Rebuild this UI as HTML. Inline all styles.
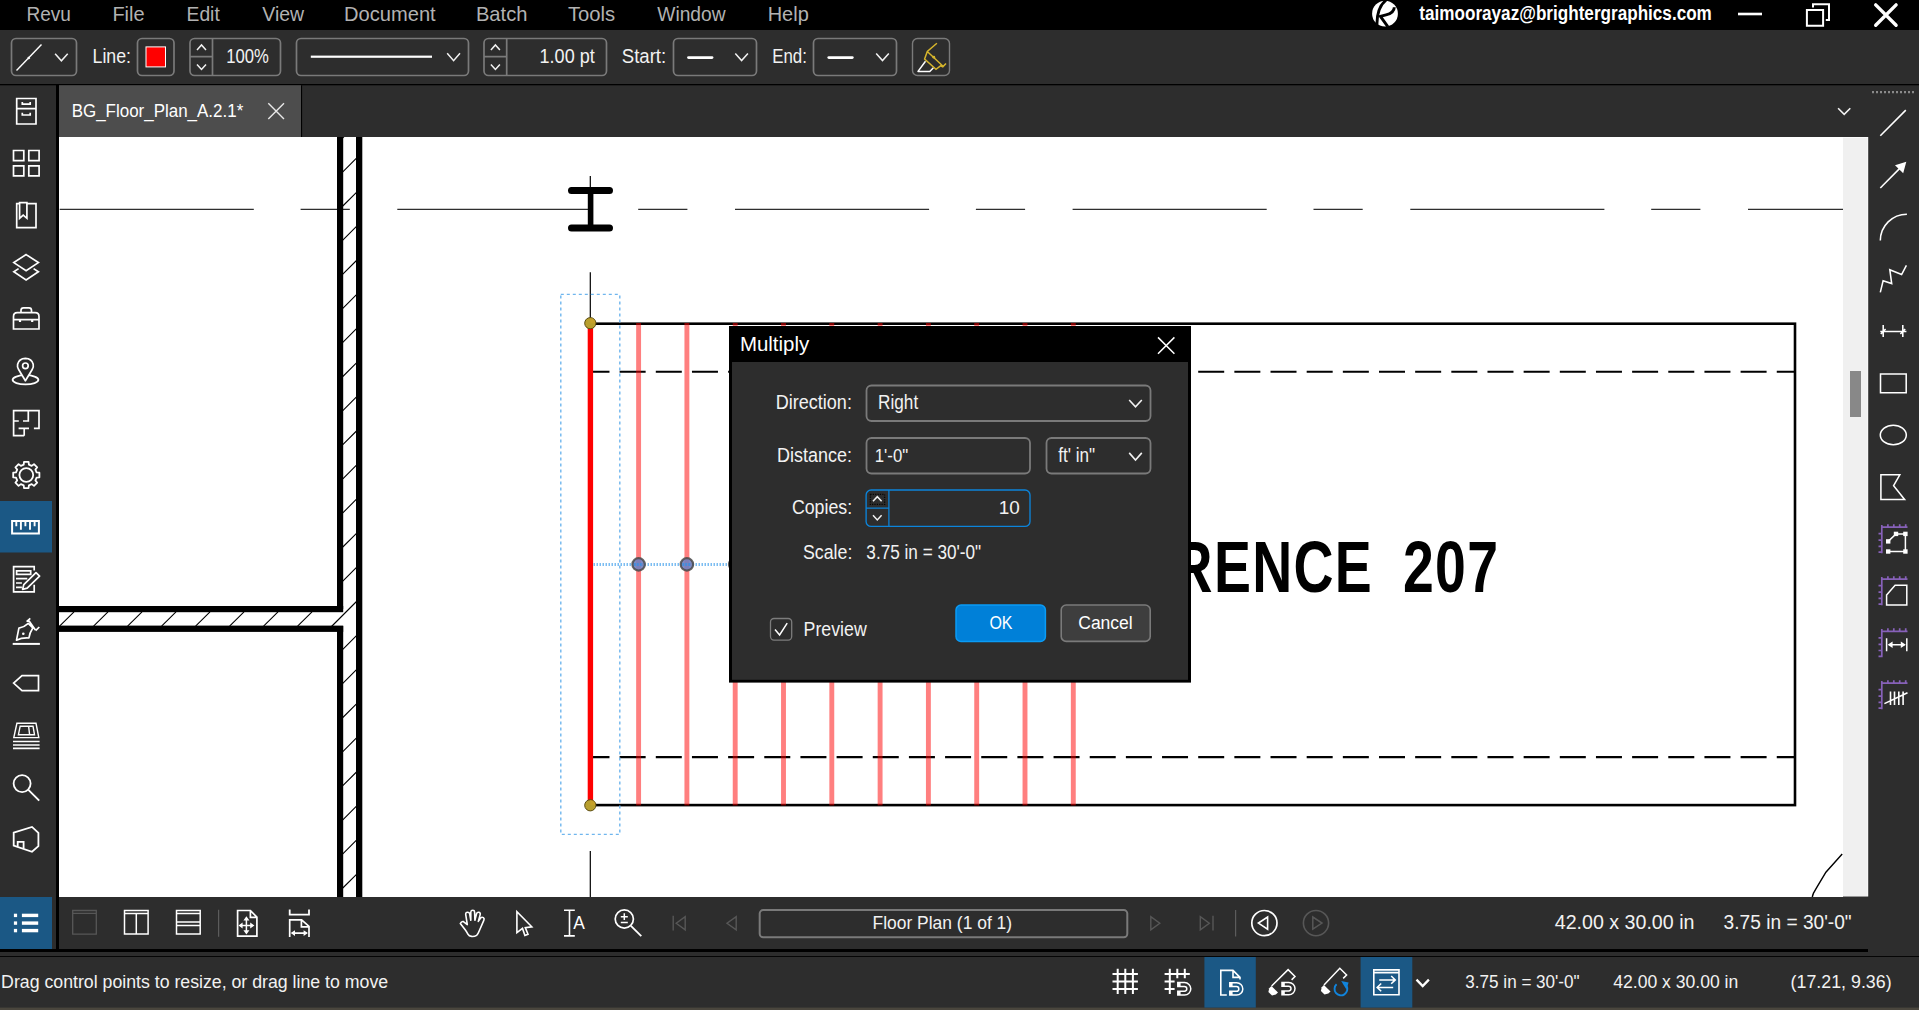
<!DOCTYPE html>
<html lang="en"><head><meta charset="utf-8"><title>Revu - BG_Floor_Plan_A.2.1</title>
<style>
html,body{margin:0;padding:0;background:#2d2d2d;overflow:hidden}
body{width:1919px;height:1010px}
svg{display:block;position:absolute;left:0;top:0}
svg text{font-family:"Liberation Sans",sans-serif;white-space:pre}
</style></head><body>
<svg width="1919" height="1010" viewBox="0 0 1919 1010">
<rect x="0" y="0" width="1919" height="1010" fill="#2d2d2d"/>
<rect x="0" y="0" width="1919" height="30" fill="#000"/>
<rect x="0" y="84" width="1919" height="1.3" fill="#000"/>
<rect x="59" y="85.3" width="242" height="52" fill="#4d4d4d"/>
<rect x="301" y="85.3" width="1.1" height="52" fill="#000"/>
<rect x="56" y="85" width="3" height="867" fill="#000"/>
<rect x="59" y="137" width="1784" height="760" fill="#fff"/>
<rect x="1843" y="137" width="25.2" height="759.5" fill="#fff"/><rect x="1843" y="137.6" width="24.6" height="758.4" fill="#f0f0f0"/>
<rect x="1850" y="371" width="11" height="46" fill="#888"/>
<rect x="0" y="949" width="1868" height="3" fill="#000"/>
<rect x="0" y="956" width="1919" height="1" fill="#050505"/>
<rect x="0" y="1007.6" width="1919" height="3" fill="#4a463d"/>
<rect x="0" y="501" width="52" height="51.5" fill="#1b5885"/>
<rect x="0" y="897" width="52" height="52" fill="#1b5885"/>
<rect x="1204.4" y="957" width="51.4" height="50.6" fill="#1b5885"/>
<rect x="1360.6" y="957" width="51.7" height="50.6" fill="#1b5885"/>
<text x="26.43" y="20.7" font-size="20.2" fill="#b2b2b2" textLength="44.44" lengthAdjust="spacingAndGlyphs" >Revu</text>
<text x="112.38" y="20.7" font-size="20.2" fill="#b2b2b2" textLength="32.20" lengthAdjust="spacingAndGlyphs" >File</text>
<text x="186.54" y="20.7" font-size="20.2" fill="#b2b2b2" textLength="33.21" lengthAdjust="spacingAndGlyphs" >Edit</text>
<text x="262.28" y="20.7" font-size="20.2" fill="#b2b2b2" textLength="41.87" lengthAdjust="spacingAndGlyphs" >View</text>
<text x="344.06" y="20.7" font-size="20.2" fill="#b2b2b2" textLength="91.66" lengthAdjust="spacingAndGlyphs" >Document</text>
<text x="475.94" y="20.7" font-size="20.2" fill="#b2b2b2" textLength="51.48" lengthAdjust="spacingAndGlyphs" >Batch</text>
<text x="567.94" y="20.7" font-size="20.2" fill="#b2b2b2" textLength="47.26" lengthAdjust="spacingAndGlyphs" >Tools</text>
<text x="657.28" y="20.7" font-size="20.2" fill="#b2b2b2" textLength="68.31" lengthAdjust="spacingAndGlyphs" >Window</text>
<text x="767.69" y="20.7" font-size="20.2" fill="#b2b2b2" textLength="41.07" lengthAdjust="spacingAndGlyphs" >Help</text>
<text x="1419.32" y="20.0" font-size="19.6" font-weight="bold" fill="#ffffff" textLength="292.52" lengthAdjust="spacingAndGlyphs" >taimoorayaz@brightergraphics.com</text>
<g transform="translate(1360,0)"><circle cx="25" cy="13.7" r="12.9" fill="#fff"/><path d="M26.6 -0.5C20.5 4.5 16.6 12 17 25" fill="none" stroke="#000" stroke-width="2.9"/><path d="M34.3 7.2C34.2 12.2 30.5 13.8 26 14.9L20.4 16.4L27.8 26.6" fill="none" stroke="#000" stroke-width="2.9" stroke-linejoin="miter"/></g>
<rect x="1738" y="12.7" width="24" height="2.6" fill="#fff"/>
<path d="M1806.9 9.9H1823.1V25.8H1806.9ZM1813 7.4V4.2H1829V19.9H1825.8" fill="none" stroke="#fff" stroke-width="2"/>
<path d="M1875.7 4.9L1896.1 25.2M1896.1 4.9L1875.7 25.2" fill="none" stroke="#fff" stroke-width="3.4" stroke-linecap="round"/>
<rect x="11.5" y="38.5" width="65.0" height="37.0" rx="4.5" fill="none" stroke="#7a7a7a" stroke-width="1.7"/>
<path d="M16.5 70.5L41.5 44.5" stroke="#fff" stroke-width="1.4" fill="none"/><path d="M28 58.5l1.6-1.2" stroke="#fff" stroke-width="2.2"/>
<path d="M55.1 53.8L61.4 60.8L67.7 53.8" fill="none" stroke="#f2f2f2" stroke-width="1.5"/>
<text x="92.50" y="63.0" font-size="19.7" fill="#f2f2f2" textLength="38.56" lengthAdjust="spacingAndGlyphs" >Line:</text>
<rect x="137.5" y="38.5" width="36.5" height="37.0" rx="4.5" fill="none" stroke="#7a7a7a" stroke-width="1.7"/>
<rect x="146" y="46.9" width="19.5" height="20" fill="#ff0000" stroke="#fff" stroke-width="1"/>
<rect x="190.0" y="38.5" width="90.5" height="37.0" rx="4.5" fill="none" stroke="#7a7a7a" stroke-width="1.7"/>
<path d="M212.5 38.5V75.5M190 56.7H212.5" stroke="#7a7a7a" stroke-width="1.7" fill="none"/>
<path d="M197.0 49.9L201.5 44.9L206.0 49.9" fill="none" stroke="#f2f2f2" stroke-width="1.5"/>
<path d="M197.0 64.5L201.5 69.5L206.0 64.5" fill="none" stroke="#f2f2f2" stroke-width="1.5"/>
<text x="226.23" y="63.0" font-size="19.7" fill="#f2f2f2" textLength="42.65" lengthAdjust="spacingAndGlyphs" >100%</text>
<rect x="296.5" y="38.5" width="172.0" height="37.0" rx="4.5" fill="none" stroke="#7a7a7a" stroke-width="1.7"/>
<rect x="310.8" y="55.6" width="121.2" height="2.2" fill="#fff"/>
<path d="M447.2 53.3L453.6 60.7L460.0 53.3" fill="none" stroke="#f2f2f2" stroke-width="1.5"/>
<rect x="484.0" y="38.5" width="122.5" height="37.0" rx="4.5" fill="none" stroke="#7a7a7a" stroke-width="1.7"/>
<path d="M506.7 38.5V75.5M484 56.7H506.7" stroke="#7a7a7a" stroke-width="1.7" fill="none"/>
<path d="M490.9 49.9L495.4 44.9L499.9 49.9" fill="none" stroke="#f2f2f2" stroke-width="1.5"/>
<path d="M490.9 64.5L495.4 69.5L499.9 64.5" fill="none" stroke="#f2f2f2" stroke-width="1.5"/>
<text x="539.60" y="63.0" font-size="19.7" fill="#f2f2f2" textLength="55.12" lengthAdjust="spacingAndGlyphs" >1.00 pt</text>
<text x="621.73" y="63.0" font-size="19.7" fill="#f2f2f2" textLength="44.46" lengthAdjust="spacingAndGlyphs" >Start:</text>
<rect x="673.5" y="38.5" width="83.0" height="37.0" rx="4.5" fill="none" stroke="#7a7a7a" stroke-width="1.7"/>
<path d="M688.5 57.6H712" stroke="#fff" stroke-width="2.8" stroke-linecap="round"/>
<path d="M735.3 53.4L741.6 60.6L747.9 53.4" fill="none" stroke="#f2f2f2" stroke-width="1.5"/>
<text x="772.24" y="63.0" font-size="19.7" fill="#f2f2f2" textLength="34.68" lengthAdjust="spacingAndGlyphs" >End:</text>
<rect x="813.5" y="38.5" width="83.0" height="37.0" rx="4.5" fill="none" stroke="#7a7a7a" stroke-width="1.7"/>
<path d="M828.8 57.6H852.3" stroke="#fff" stroke-width="2.8" stroke-linecap="round"/>
<path d="M876.2 53.4L882.5 60.6L888.8 53.4" fill="none" stroke="#f2f2f2" stroke-width="1.5"/>
<rect x="912.5" y="38.5" width="37.0" height="37.0" rx="5" fill="none" stroke="#7a7a7a" stroke-width="1.4"/>
<path d="M925.5 61.3L918 71.4H929.8L933.4 67.7" fill="none" stroke="#fff" stroke-width="1.5" stroke-linejoin="round"/>
<path d="M936.9 43.3L927.3 51.5L924.6 59L936 69.3L940.5 65.9L942.8 66.8L946 63.4M927.3 51.5L942.8 66" fill="none" stroke="#d6b52c" stroke-width="1.5"/>
<circle cx="933.8" cy="57.2" r="1.4" fill="#d6b52c"/>
<text x="71.63" y="116.8" font-size="18.9" fill="#ffffff" textLength="171.64" lengthAdjust="spacingAndGlyphs" >BG_Floor_Plan_A.2.1*</text>
<path d="M268.3 103.3L284 119M284 103.3L268.3 119" stroke="#e8e8e8" stroke-width="1.4" fill="none"/>
<path d="M1838.1 108.2L1844.2 114.4L1850.3 108.2" fill="none" stroke="#f2f2f2" stroke-width="1.6"/>
<path d="M1872 92.2H1914.2" stroke="#8a8a8a" stroke-width="2.2" stroke-dasharray="2 2" fill="none"/>
<text x="872.58" y="929.0" font-size="18.9" fill="#f2f2f2" textLength="139.49" lengthAdjust="spacingAndGlyphs" >Floor Plan (1 of 1)</text>
<text x="1554.76" y="928.8" font-size="20.3" fill="#f2f2f2" textLength="139.66" lengthAdjust="spacingAndGlyphs" >42.00 x 30.00 in</text>
<text x="1723.61" y="928.8" font-size="20.3" fill="#f2f2f2" textLength="128.05" lengthAdjust="spacingAndGlyphs" >3.75 in = 30'-0&quot;</text>
<text x="1.12" y="987.9" font-size="18.75" fill="#f2f2f2" textLength="386.99" lengthAdjust="spacingAndGlyphs" >Drag control points to resize, or drag line to move</text>
<text x="1465.36" y="987.9" font-size="18.75" fill="#f2f2f2" textLength="114.27" lengthAdjust="spacingAndGlyphs" >3.75 in = 30'-0&quot;</text>
<text x="1613.20" y="987.9" font-size="18.75" fill="#f2f2f2" textLength="125.13" lengthAdjust="spacingAndGlyphs" >42.00 x 30.00 in</text>
<text x="1790.58" y="987.9" font-size="18.75" fill="#f2f2f2" textLength="101.00" lengthAdjust="spacingAndGlyphs" >(17.21, 9.36)</text>
<rect x="759.7" y="910.1" width="367.6" height="27.1" rx="3.5" fill="none" stroke="#7a7a7a" stroke-width="2"/>
<defs><clipPath id="cv"><rect x="59" y="137" width="1784" height="760"/></clipPath></defs>
<g clip-path="url(#cv)">
<path d="M59.7 209.3H253.8M300.6 209.3H349.8M397.3 209.3H591.4M638.2 209.3H687.4M735.0 209.3H929.1M975.9 209.3H1025.1M1072.6 209.3H1266.7M1313.5 209.3H1362.7M1410.3 209.3H1604.4M1651.2 209.3H1700.4M1748.0 209.3H1942.0M1988.8 209.3H2038.0M2085.6 209.3H2279.7M2326.5 209.3H2375.7" stroke="#2e2e2e" stroke-width="1.35" fill="none"/>
<rect x="337" y="137" width="6.2" height="472" fill="#000"/>
<rect x="337" y="626" width="6.2" height="271" fill="#000"/>
<rect x="356" y="137" width="6.3" height="760" fill="#000"/>
<rect x="59" y="606" width="284.2" height="6.2" fill="#000"/>
<rect x="59" y="625.6" width="284.2" height="6.3" fill="#000"/>
<path d="M356.5 90.0L342.8 103.7M356.5 124.1L342.8 137.8M356.5 158.2L342.8 171.9M356.5 192.3L342.8 206.0M356.5 226.4L342.8 240.1M356.5 260.5L342.8 274.2M356.5 294.6L342.8 308.3M356.5 328.7L342.8 342.4M356.5 362.8L342.8 376.5M356.5 396.9L342.8 410.6M356.5 431.0L342.8 444.7M356.5 465.1L342.8 478.8M356.5 499.2L342.8 512.9M356.5 533.3L342.8 547.0M356.5 567.4L342.8 581.1M356.5 601.5L331.5 626.5M356.5 635.6L342.8 649.3M356.5 669.7L342.8 683.4M356.5 703.8L342.8 717.5M356.5 737.9L342.8 751.6M356.5 772.0L342.8 785.7M356.5 806.1L342.8 819.8M356.5 840.2L342.8 853.9M356.5 874.3L342.8 888.0M297.6 626.2L312.0 611.8M263.6 626.2L278.0 611.8M229.6 626.2L244.0 611.8M195.6 626.2L210.0 611.8M161.6 626.2L176.0 611.8M127.6 626.2L142.0 611.8M93.6 626.2L108.0 611.8M59.6 626.2L74.0 611.8" stroke="#000" stroke-width="1.1" fill="none"/>
<path d="M590.3 176V190M590.3 272.2V323M590.3 851V897" stroke="#000" stroke-width="1.2" fill="none"/>
<path d="M571.5 190.4H609.5M571.5 228.1H609.5" stroke="#000" stroke-width="7" stroke-linecap="round" fill="none"/>
<rect x="587.8" y="190" width="5.6" height="38" fill="#000"/>
<rect x="590.3" y="323.7" width="1204.7" height="481.4" fill="none" stroke="#000" stroke-width="2.6"/>
<path d="M590.3 371.8H1794" stroke="#000" stroke-width="2.1" stroke-dasharray="26 10.16" stroke-dashoffset="6.82" fill="none"/>
<path d="M590.3 757.1H1794" stroke="#000" stroke-width="2.1" stroke-dasharray="26 10.16" stroke-dashoffset="6.82" fill="none"/>
<g transform="translate(1373.1 592.4) scale(0.775 1)"><text x="0" y="0" font-size="71.5" font-weight="bold" fill="#000" text-anchor="end" letter-spacing="1.7">CONFERENCE</text></g>
<g transform="translate(1402.9 592.4) scale(0.775 1)"><text x="0" y="0" font-size="71.5" font-weight="bold" fill="#000" letter-spacing="1.7">207</text></g>
<path d="M1842.2 854L1825.9 872.2L1818 885.3Q1814.6 891 1813.6 892.9Q1812.7 895 1812.3 897.2" stroke="#000" stroke-width="1.4" fill="none"/>
<rect x="636.15" y="323" width="4.9" height="482.4" fill="#ff0000" fill-opacity="0.5"/>
<rect x="684.45" y="323" width="4.9" height="482.4" fill="#ff0000" fill-opacity="0.5"/>
<rect x="732.75" y="323" width="4.9" height="482.4" fill="#ff0000" fill-opacity="0.5"/>
<rect x="781.05" y="323" width="4.9" height="482.4" fill="#ff0000" fill-opacity="0.5"/>
<rect x="829.35" y="323" width="4.9" height="482.4" fill="#ff0000" fill-opacity="0.5"/>
<rect x="877.65" y="323" width="4.9" height="482.4" fill="#ff0000" fill-opacity="0.5"/>
<rect x="925.95" y="323" width="4.9" height="482.4" fill="#ff0000" fill-opacity="0.5"/>
<rect x="974.25" y="323" width="4.9" height="482.4" fill="#ff0000" fill-opacity="0.5"/>
<rect x="1022.55" y="323" width="4.9" height="482.4" fill="#ff0000" fill-opacity="0.5"/>
<rect x="1070.85" y="323" width="4.9" height="482.4" fill="#ff0000" fill-opacity="0.5"/>
<rect x="560.8" y="294.4" width="59" height="540" fill="none" stroke="#6fb6ee" stroke-width="1.4" stroke-dasharray="3 3"/>
<rect x="587.7" y="323" width="5.4" height="482.5" fill="#ff0000"/>
<path d="M593.5 564.4H732" stroke="#7cbdf2" stroke-width="3" stroke-dasharray="1.5 1.5" fill="none"/>
<circle cx="638.6" cy="564.4" r="6.2" fill="#6f7fc0" fill-opacity="0.9" stroke="#4a4a4a" stroke-opacity="0.85" stroke-width="2.2"/>
<path d="M634.1 564.4H643.1" stroke="#3d8fe0" stroke-width="3" stroke-dasharray="1.5 1.5" fill="none"/>
<circle cx="686.9" cy="564.4" r="6.2" fill="#6f7fc0" fill-opacity="0.9" stroke="#4a4a4a" stroke-opacity="0.85" stroke-width="2.2"/>
<path d="M682.4 564.4H691.4" stroke="#3d8fe0" stroke-width="3" stroke-dasharray="1.5 1.5" fill="none"/>
<circle cx="735.2" cy="564.4" r="6.2" fill="#6f7fc0" fill-opacity="0.9" stroke="#4a4a4a" stroke-opacity="0.85" stroke-width="2.2"/>
<path d="M730.7 564.4H739.7" stroke="#3d8fe0" stroke-width="3" stroke-dasharray="1.5 1.5" fill="none"/>
<circle cx="590.3" cy="323.2" r="5.6" fill="#b89f2e" stroke="#5c4d12" stroke-width="1"/>
<path d="M590.3 323.2h5.2a5.2 5.2 0 0 0-5.2-5.2z" fill="#cfa32a" fill-opacity=".6"/>
<circle cx="590.3" cy="805.3" r="5.6" fill="#b89f2e" stroke="#5c4d12" stroke-width="1"/>
<path d="M590.3 805.3h5.2a5.2 5.2 0 0 0-5.2-5.2z" fill="#cfa32a" fill-opacity=".6"/>
</g>
<path d="M16.7 98.5H36V124H16.7ZM16.7 108.6H36M22.3 102V104.2H30.2V102M22.3 112.8V115H30.2V112.8" fill="none" stroke="#ffffff" stroke-width="1.7" />
<path d="M13.5 150.5H23.8V160.6H13.5ZM28.8 150.5H39.1V160.6H28.8ZM13.5 165.8H23.8V175.9H13.5ZM28.8 165.8H39.1V175.9H28.8Z" fill="none" stroke="#ffffff" stroke-width="1.7" />
<path d="M19.6 203.7H16.7V227.7H36V203.7H27M19.6 202.6H26.9V218.3L23.2 215.2L19.6 218.3Z" fill="none" stroke="#ffffff" stroke-width="1.7" />
<path d="M26.1 254.6L38.4 262.6L26.1 270.8L13.8 262.6ZM18.6 268.6L13.8 271.8L26.1 280L38.4 271.8L33.6 268.6" fill="none" stroke="#ffffff" stroke-width="1.7" stroke-linejoin="miter"/>
<path d="M13.5 329V316.5Q13.5 312.7 17.3 312.7H35.2Q39 312.7 39 316.5V329ZM13.5 319.7H39M21 312.7V310.3Q21 307.8 23.5 307.8H29Q31.5 307.8 31.5 310.3V312.7" fill="none" stroke="#ffffff" stroke-width="1.7" />
<path d="M20 319.7V322M32.2 319.7V322" fill="none" stroke="#ffffff" stroke-width="2.2" />
<ellipse cx="25.5" cy="379.8" rx="12.9" ry="4.6" fill="none" stroke="#ffffff" stroke-width="1.8"/>
<path d="M25.4 380.8L18.6 369.5Q17 366.8 17.6 364.3Q19 358.4 25.4 358.3Q31.8 358.4 33.2 364.3Q33.8 366.8 32.2 369.5Z" fill="#2d2d2d" stroke="#ffffff" stroke-width="1.7" stroke-linejoin="round"/>
<circle cx="25.4" cy="365.8" r="2.8" fill="none" stroke="#ffffff" stroke-width="1.7"/>
<path d="M24.2 435.7H13.6V410.7H39V428.3H33.9M24.2 435.7V428.3M18.6 428.3H29M28.3 410.7V421H23M13.6 421H18.8" fill="none" stroke="#ffffff" stroke-width="1.7" />
<path d="M23.7 464.7L24.0 461.9L28.6 461.9L28.9 464.7L31.7 465.9L34.0 464.1L37.2 467.3L35.4 469.6L36.6 472.4L39.4 472.7L39.4 477.3L36.6 477.6L35.4 480.4L37.2 482.7L34.0 485.9L31.7 484.1L28.9 485.3L28.6 488.1L24.0 488.1L23.7 485.3L20.9 484.1L18.6 485.9L15.4 482.7L17.2 480.4L16.0 477.6L13.2 477.3L13.2 472.7L16.0 472.4L17.2 469.6L15.4 467.3L18.6 464.1L20.9 465.9Z" fill="none" stroke="#ffffff" stroke-width="1.8" stroke-linejoin="round"/>
<circle cx="26.3" cy="475" r="6.9" fill="none" stroke="#ffffff" stroke-width="1.8"/>
<path d="M12.1 520.9H38.9V533.6H12.1Z" fill="none" stroke="#fff" stroke-width="2" />
<path d="M16.3 521V526.3M20.9 521V529.8M25.4 521V526.3M30 521V529.8M34.6 521V526.3" fill="none" stroke="#fff" stroke-width="1.9" />
<path d="M34.2 570.5V566.6H13.6V591.9H34.2V584.8" fill="none" stroke="#ffffff" stroke-width="1.7" />
<path d="M16.6 570.9H30.7V574.3H16.6ZM16 578.6H27.3M16 583H21.9M16 587.3H21.9" fill="none" stroke="#ffffff" stroke-width="1.7" />
<path d="M36 572.6L39.6 576.2L27.2 588.2L22.6 589.3L23.8 584.6Z" fill="none" stroke="#ffffff" stroke-width="1.7" stroke-linejoin="round"/>
<path d="M12.7 643.9H39.9" fill="none" stroke="#ffffff" stroke-width="2" />
<path d="M16.5 640.2L18.9 628.2Q23.6 627.5 28.3 623.3L32.8 628Q29.5 633 28.9 638Q22 637.5 16.5 640.2ZM26.6 621.6L30.3 618.3M28.4 620L35.4 629.9M35.6 630.6L39.3 627" fill="none" stroke="#ffffff" stroke-width="1.7" stroke-linejoin="round"/>
<circle cx="23.3" cy="633.8" r="1.3" fill="#ffffff"/>
<path d="M13.6 683.1L22 675.6H38.5V690.7H22Z" fill="none" stroke="#ffffff" stroke-width="1.7" />
<path d="M16.9 723.3H36L38.8 737.6H13.8ZM20.2 726.2H33L34.5 734.7H18.4ZM28.6 726.2L29.6 734.7" fill="none" stroke="#ffffff" stroke-width="1.4" />
<path d="M13 741.5H39.6M13 745H39.6M13 748.4H39.6" fill="none" stroke="#ffffff" stroke-width="1.7" />
<circle cx="22.1" cy="783.6" r="8.5" fill="none" stroke="#ffffff" stroke-width="1.8"/>
<path d="M28.4 789.9L39.2 800.6" fill="none" stroke="#ffffff" stroke-width="1.9" />
<path d="M13.7 832.6L32 826.9L38.4 832.9V846.2L32 851.8L13.7 845.7ZM17.7 847V841.8H23.6V849" fill="none" stroke="#ffffff" stroke-width="1.8" stroke-linejoin="miter"/>
<rect x="13.9" y="913.7" width="3.2" height="3.4" fill="#fff"/><rect x="21.9" y="913.7" width="16.3" height="3.4" fill="#fff"/>
<rect x="13.9" y="921.4" width="3.2" height="3.4" fill="#fff"/><rect x="21.9" y="921.4" width="16.3" height="3.4" fill="#fff"/>
<rect x="13.9" y="928.9" width="3.2" height="3.4" fill="#fff"/><rect x="21.9" y="928.9" width="16.3" height="3.4" fill="#fff"/>
<path d="M1880.3 135.7L1905.8 110.1" fill="none" stroke="#ffffff" stroke-width="1.55" />
<path d="M1880.3 188L1899.5 168.6" fill="none" stroke="#ffffff" stroke-width="1.55" />
<path d="M1906.3 161.8L1895 165.2L1903.2 173.2Z" fill="#ffffff"/>
<path d="M1880.3 240.6A26.6 26.6 0 0 1 1906.9 214.2" fill="none" stroke="#ffffff" stroke-width="1.55" />
<path d="M1880.3 292.4L1883.1 280.8L1891.7 283.6L1889.8 269.7L1901.6 274.5L1906.4 265.3" fill="none" stroke="#ffffff" stroke-width="1.55" />
<path d="M1880.3 331.5H1906.4M1883.2 325.1V337M1902.8 325.1V337M1880.8 334L1885.6 329M1900.4 334L1905.2 329" fill="none" stroke="#ffffff" stroke-width="1.55" />
<path d="M1880.5 373.9H1906.2V392.7H1880.5Z" fill="none" stroke="#ffffff" stroke-width="1.55" />
<ellipse cx="1893.3" cy="435" rx="13" ry="9.8" fill="none" stroke="#ffffff" stroke-width="1.55"/>
<path d="M1880.9 474.8H1899.8L1893.6 485.7L1904.6 499.4H1880.9Z" fill="none" stroke="#ffffff" stroke-width="1.55" />
<path d="M1881.8 524.9V553.2M1881 527.2H1907.5M1887.9 524.2V527.2M1893.8 524.2V527.2M1899.7 524.2V527.2M1905.7 524.2V527.2M1878.5 533.7H1881.8M1878.5 540.2H1881.8M1878.5 546.4H1881.8M1878.5 552.2H1881.8" fill="none" stroke="#8761b9" stroke-width="1.7" />
<path d="M1881.8 576.9V605.2M1881 579.2H1907.5M1887.9 576.2V579.2M1893.8 576.2V579.2M1899.7 576.2V579.2M1905.7 576.2V579.2M1878.5 585.7H1881.8M1878.5 592.2H1881.8M1878.5 598.4H1881.8M1878.5 604.2H1881.8" fill="none" stroke="#8761b9" stroke-width="1.7" />
<path d="M1881.8 629.0V657.3M1881 631.3H1907.5M1887.9 628.3V631.3M1893.8 628.3V631.3M1899.7 628.3V631.3M1905.7 628.3V631.3M1878.5 637.8H1881.8M1878.5 644.3H1881.8M1878.5 650.5H1881.8M1878.5 656.3H1881.8" fill="none" stroke="#8761b9" stroke-width="1.7" />
<path d="M1881.8 680.9V709.2M1881 683.2H1907.5M1887.9 680.2V683.2M1893.8 680.2V683.2M1899.7 680.2V683.2M1905.7 680.2V683.2M1878.5 689.7H1881.8M1878.5 696.2H1881.8M1878.5 702.4H1881.8M1878.5 708.2H1881.8" fill="none" stroke="#8761b9" stroke-width="1.7" />
<path d="M1888.2 541.4L1896 533.9H1905.4V551.5H1888.2" fill="none" stroke="#ffffff" stroke-width="1.5" />
<rect x="1886.0" y="539.2" width="4.4" height="4.4" fill="#fff"/>
<rect x="1893.8" y="531.7" width="4.4" height="4.4" fill="#fff"/>
<rect x="1903.2" y="531.7" width="4.4" height="4.4" fill="#fff"/>
<rect x="1903.2" y="549.3" width="4.4" height="4.4" fill="#fff"/>
<rect x="1886.0" y="549.3" width="4.4" height="4.4" fill="#fff"/>
<path d="M1886.6 594.9L1895.1 585.2H1906.8V605H1886.6Z" fill="none" stroke="#ffffff" stroke-width="1.5" />
<path d="M1886.6 638.3V651.3M1906.8 638.3V651.3M1889 644.8H1904.5" fill="none" stroke="#ffffff" stroke-width="1.5" />
<path d="M1887.6 644.8L1892.6 641.6V648ZM1905.8 644.8L1900.8 641.6V648Z" fill="#fff"/>
<path d="M1890.5 691.6V705.1M1894.5 691.6V705.1M1898.8 691.6V705.1M1903.1 691.6V705.1M1884.4 703.6L1907.5 692.7" fill="none" stroke="#ffffff" stroke-width="1.6" />
<path d="M72.7 910.5H96.3V934.1H72.7ZM72.7 913.4H96.3" fill="none" stroke="#575757" stroke-width="1.3" />
<path d="M124.5 910.6H148.1V934.1H124.5ZM124.5 913.4H148.1M136.3 913.4V934.1" fill="none" stroke="#ffffff" stroke-width="1.5" />
<path d="M176.5 910.6H200.2V934.1H176.5ZM176.5 913.4H200.2M176.5 922.1H200.2M176.5 925.6H200.2" fill="none" stroke="#ffffff" stroke-width="1.5" />
<path d="M218.6 909.8V936.8" fill="none" stroke="#5c5c5c" stroke-width="1.2" />
<path d="M250.4 910.5H237.6V936.1H256.9V917.1ZM250.4 911V917.3H256.4" fill="none" stroke="#ffffff" stroke-width="1.7" stroke-linejoin="miter"/>
<path d="M246.4 919V932M240.8 925.5H252.2" fill="none" stroke="#ffffff" stroke-width="1.5" />
<path d="M246.4 916.2L249.4 920.6H243.4ZM246.4 934.6L249.4 930.3H243.4ZM238.5 925.5L242.6 922.6V928.4ZM254.4 925.5L250.2 922.6V928.4Z" fill="#fff"/>
<path d="M289.7 909.6V914.6H309V909.6" fill="none" stroke="#ffffff" stroke-width="1.8" />
<path d="M289.7 937V919.9H301.6L309 926.3V937M301.4 920.4V926.8H308.5M292 933.1H306.5" fill="none" stroke="#ffffff" stroke-width="1.7" stroke-linejoin="miter"/>
<path d="M290.7 933.1L295 930.2V936ZM307.9 933.1L303.6 930.2V936Z" fill="#fff"/>
<path d="M460.3 923.6Q461.5 921 463.4 921.6L467.3 924.6L465.7 914.3Q465.6 912.2 467.6 912.2Q469.4 912.2 469.7 913.9L470.8 920.3V912Q471 910.3 472.8 910.3Q474.5 910.3 474.6 912L474.9 920.3L476.6 913.6Q477.2 911.9 479 912.3Q480.6 912.8 480.2 914.6L478.3 921.4L480.6 918Q481.9 916.7 483.4 917.7Q484.7 918.8 483.8 920.4L479.4 930.5Q478 934.2 476.6 935.3Q474.6 936.6 471.6 936.4Q469 936.3 467.9 934.2Q466.5 931.4 465 929.5Z" fill="none" stroke="#ffffff" stroke-width="1.6" stroke-linejoin="round"/>
<path d="M516.9 911.6V932.6L522.5 928.4L524.9 935.5L528 934.2L525.3 927.6L531.8 926.8Z" fill="none" stroke="#ffffff" stroke-width="1.6" stroke-linejoin="miter"/>
<path d="M569.5 910.2V936M564 910.3H574.8M564 935.9H574.8" fill="none" stroke="#ffffff" stroke-width="1.6" />
<text x="573.3" y="929" font-size="18.6" fill="#ffffff" textLength="11.6" lengthAdjust="spacingAndGlyphs">A</text>
<circle cx="624.3" cy="919" r="9.1" fill="none" stroke="#ffffff" stroke-width="1.7"/>
<path d="M630.9 925.8L641.3 936.2" fill="none" stroke="#ffffff" stroke-width="1.8" />
<path d="M620.8 916.7H627.8M624.3 913.3V920M620.8 922.5H627.8" fill="none" stroke="#ffffff" stroke-width="1.5" />
<path d="M673.2 915.8V930.5M685.2 916.6V929.8L676.2 923.2Z" fill="none" stroke="#575757" stroke-width="1.4" />
<path d="M736.2 916.6V929.8L727 923.2Z" fill="none" stroke="#575757" stroke-width="1.4" />
<path d="M1150.8 916.6V929.8L1159.8 923.2Z" fill="none" stroke="#575757" stroke-width="1.4" />
<path d="M1200.3 916.6V929.8L1209.3 923.2ZM1213 915.8V930.5" fill="none" stroke="#575757" stroke-width="1.4" />
<path d="M1235.6 910V936.6" fill="none" stroke="#5c5c5c" stroke-width="1.2" />
<circle cx="1264.4" cy="923.1" r="12.6" fill="none" stroke="#ffffff" stroke-width="1.7"/>
<path d="M1267.6 917V929.2L1258.4 923.1Z" fill="none" stroke="#ffffff" stroke-width="1.6" stroke-linejoin="miter"/>
<circle cx="1316" cy="923.1" r="12.6" fill="none" stroke="#575757" stroke-width="1.6"/>
<path d="M1312.8 917V929.2L1322 923.1Z" fill="none" stroke="#575757" stroke-width="1.5" />
<path d="M1117.7 968.7V994M1125.3 968.7V994M1132.9 968.7V994M1112.5 974H1137.9M1112.5 981.6H1137.9M1112.5 989H1137.9" fill="none" stroke="#fff" stroke-width="2" />
<path d="M1169.8 968.7V994M1177.3 968.7V978.3M1184.8 968.7V978.3M1164.6 974H1189.8M1164.6 981.6H1174.6M1164.6 989H1174.6" fill="none" stroke="#fff" stroke-width="2" />
<g transform="translate(1177 981.8) scale(1.0)"><path d="M0.8 0.8H7.6A6.2 6.2 0 0 1 7.6 13.2H0.8V9.4H7.4A2.4 2.4 0 0 0 7.4 4.6H0.8Z" fill="none" stroke="#fff" stroke-width="1.5"/><path d="M0.8 0.8H3.6V4.6H0.8ZM0.8 9.4H3.6V13.2H0.8Z" fill="#fff"/></g>
<path d="M1226.8 995H1220.8V970.4H1233L1240 977.4V979.5M1233 970.4V977.4H1240" fill="none" stroke="#fff" stroke-width="1.6" stroke-linejoin="miter"/>
<g transform="translate(1229 981.9) scale(1.0)"><path d="M0.8 0.8H7.6A6.2 6.2 0 0 1 7.6 13.2H0.8V9.4H7.4A2.4 2.4 0 0 0 7.4 4.6H0.8Z" fill="none" stroke="#fff" stroke-width="1.5"/><path d="M0.8 0.8H3.6V4.6H0.8ZM0.8 9.4H3.6V13.2H0.8Z" fill="#fff"/></g>
<path d="M1271.6 986L1288.1 969.6L1295 976.5L1291.6 979.9" fill="none" stroke="#fff" stroke-width="1.5" stroke-linejoin="miter"/>
<path d="M1269.2 988.2L1271.4 986L1278 992.4L1275.8 994.6L1272 995.6L1268.4 992Z" fill="#fff"/>
<g transform="translate(1281.2 981.6) scale(1.0)"><path d="M0.8 0.8H7.6A6.2 6.2 0 0 1 7.6 13.2H0.8V9.4H7.4A2.4 2.4 0 0 0 7.4 4.6H0.8Z" fill="none" stroke="#fff" stroke-width="1.5"/><path d="M0.8 0.8H3.6V4.6H0.8ZM0.8 9.4H3.6V13.2H0.8Z" fill="#fff"/></g>
<path d="M1324 985L1339.8 968.3L1346.6 975L1343.2 978.4" fill="none" stroke="#fff" stroke-width="1.5" stroke-linejoin="miter"/>
<path d="M1321.7 987.2L1323.9 985L1330.5 991.4L1328.3 993.6L1324.5 994.6L1320.9 991Z" fill="#fff"/>
<path d="M1336.6 984.3A6.4 6.4 0 1 0 1346.6 986" fill="none" stroke="#1184dc" stroke-width="1.9" />
<path d="M1341.2 981L1348.6 982.6L1346.4 989.6Z" fill="#1184dc"/>
<path d="M1373.8 969.9H1399V994.7H1373.8ZM1373.8 972.6H1399" fill="none" stroke="#fff" stroke-width="1.6" />
<path d="M1379.2 979.9H1395M1391.2 976L1395.3 979.9L1391.2 983.8M1393.2 987.4H1377.4M1381.2 983.5L1377.1 987.4L1381.2 991.3" fill="none" stroke="#fff" stroke-width="1.5" />
<path d="M1416.5 979.6L1422.7 986.0L1428.9 979.6" fill="none" stroke="#fff" stroke-width="2.3"/>
<rect x="729" y="326" width="462" height="356.6" fill="#000"/>
<rect x="732" y="362" width="456" height="317.8" fill="#2d2d2d"/>
<text x="739.90" y="350.9" font-size="20" fill="#ffffff" textLength="69.37" lengthAdjust="spacingAndGlyphs" >Multiply</text>
<path d="M1158 337.4L1174.4 353.8M1174.4 337.4L1158 353.8" stroke="#fff" stroke-width="1.5" fill="none"/>
<text x="775.72" y="409.2" font-size="19.3" fill="#f2f2f2" textLength="76.20" lengthAdjust="spacingAndGlyphs" >Direction:</text>
<rect x="866.5" y="385.5" width="284.0" height="35.5" rx="5" fill="none" stroke="#7a7a7a" stroke-width="1.8"/>
<text x="878.08" y="409.2" font-size="19.3" fill="#f2f2f2" textLength="40.07" lengthAdjust="spacingAndGlyphs" >Right</text>
<path d="M1129.2 400.0L1135.5 406.8L1141.8 400.0" fill="none" stroke="#f2f2f2" stroke-width="1.6"/>
<text x="777.02" y="461.9" font-size="19.3" fill="#f2f2f2" textLength="74.92" lengthAdjust="spacingAndGlyphs" >Distance:</text>
<rect x="866.5" y="438.0" width="163.5" height="35.5" rx="5" fill="none" stroke="#7a7a7a" stroke-width="1.8"/>
<text x="874.80" y="462.0" font-size="18.8" fill="#f2f2f2" textLength="33.37" lengthAdjust="spacingAndGlyphs" >1'-0&quot;</text>
<rect x="1046.5" y="438.0" width="104.0" height="35.5" rx="5" fill="none" stroke="#7a7a7a" stroke-width="1.8"/>
<text x="1058.15" y="461.9" font-size="19.3" fill="#f2f2f2" textLength="36.91" lengthAdjust="spacingAndGlyphs" >ft' in&quot;</text>
<path d="M1129.2 452.9L1135.5 460.1L1141.8 452.9" fill="none" stroke="#f2f2f2" stroke-width="1.6"/>
<text x="791.89" y="513.9" font-size="19.3" fill="#f2f2f2" textLength="60.28" lengthAdjust="spacingAndGlyphs" >Copies:</text>
<rect x="866.1" y="490.0" width="163.9" height="36.4" rx="5" fill="none" stroke="#0c84da" stroke-width="1.35"/>
<path d="M888.9 490V526.5M866 508H888.9" stroke="#0c84da" stroke-width="1.25" fill="none"/>
<rect x="870.4" y="494.4" width="14.2" height="10" fill="none" stroke="#060606" stroke-width="1.3" stroke-dasharray="1.2 1.17"/>
<path d="M873.0 501.3L877.3 496.7L881.6 501.3" fill="none" stroke="#f2f2f2" stroke-width="1.5"/>
<path d="M873.0 515.3L877.3 519.9L881.6 515.3" fill="none" stroke="#f2f2f2" stroke-width="1.5"/>
<text x="998.70" y="513.8" font-size="18.3" fill="#f2f2f2" textLength="21.03" lengthAdjust="spacingAndGlyphs" >10</text>
<text x="802.99" y="558.8" font-size="19.3" fill="#f2f2f2" textLength="49.37" lengthAdjust="spacingAndGlyphs" >Scale:</text>
<text x="866.35" y="558.8" font-size="19.3" fill="#f2f2f2" textLength="114.84" lengthAdjust="spacingAndGlyphs" >3.75 in = 30'-0&quot;</text>
<rect x="770.5" y="618.5" width="21.2" height="21.6" rx="3.5" fill="none" stroke="#7c7c7c" stroke-width="1.3"/>
<path d="M775 629.6L779.6 635L787.2 623.2" stroke="#fff" stroke-width="1.5" fill="none"/>
<text x="803.62" y="635.8" font-size="19.3" fill="#f2f2f2" textLength="63.10" lengthAdjust="spacingAndGlyphs" >Preview</text>
<rect x="956" y="605" width="89.4" height="36.4" rx="5" fill="#0080d8" stroke="#0a9bf5" stroke-width="1.5"/>
<text x="989.40" y="629.0" font-size="19.2" fill="#ffffff" textLength="23.13" lengthAdjust="spacingAndGlyphs" >OK</text>
<rect x="1061.2" y="605" width="89" height="36.4" rx="5" fill="#3e3e3e" stroke="#7a7a7a" stroke-width="1.6"/>
<text x="1078.24" y="629.0" font-size="19.2" fill="#ffffff" textLength="54.52" lengthAdjust="spacingAndGlyphs" >Cancel</text>
</svg>
</body></html>
